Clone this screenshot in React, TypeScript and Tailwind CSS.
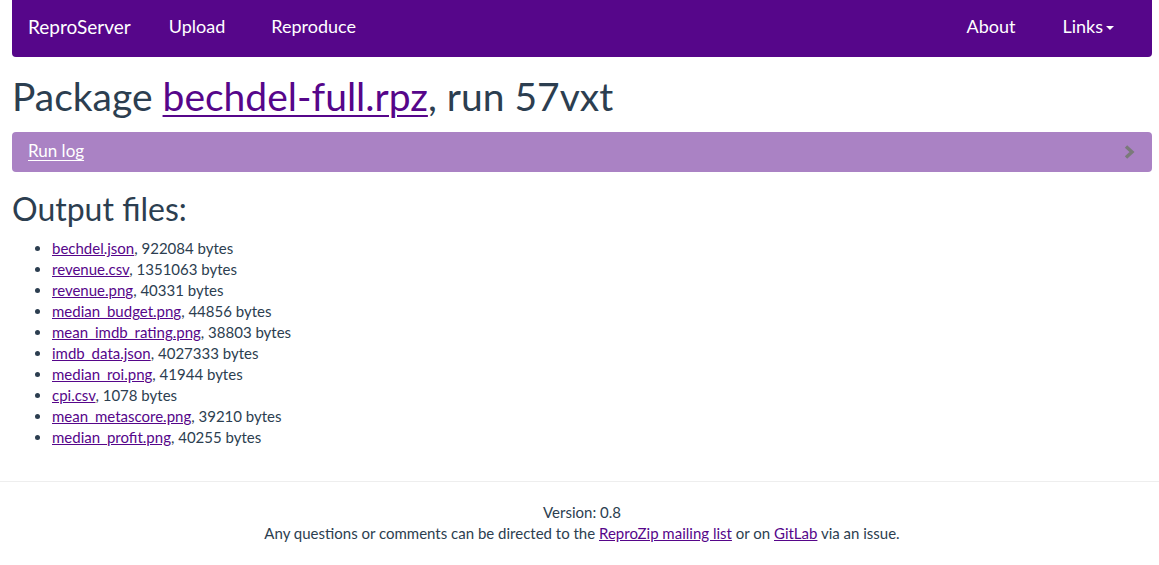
const files: [string, number][] = [
  ["bechdel.json", 922084],
  ["revenue.csv", 1351063],
  ["revenue.png", 40331],
  ["median_budget.png", 44856],
  ["mean_imdb_rating.png", 38803],
  ["imdb_data.json", 4027333],
  ["median_roi.png", 41944],
  ["cpi.csv", 1078],
  ["mean_metascore.png", 39210],
  ["median_profit.png", 40255],
];

function Navbar() {
  return (
    <nav className="ml-3 mr-[7px] h-[57px] bg-[#56068a] rounded-b-[4px] flex items-center text-white text-[18px] pb-[4px]">
      <a className="pl-4 text-[19px]">ReproServer</a>
      <a className="ml-[38px]">Upload</a>
      <a className="ml-[46px]">Reproduce</a>
      <div className="flex-1" />
      <a>About</a>
      <a className="ml-[47px] flex items-center">
        Links
        <span className="ml-[3px] mt-[2px] w-0 h-0 border-x-[4px] border-x-transparent border-t-[4px] border-t-white" />
      </a>
      <div className="w-[38px]" />
    </nav>
  );
}

export default function App() {
  return (
    <div
      className="min-h-screen bg-white text-[#2c3e50] text-[15px] leading-[21px]"
      style={{ fontFamily: "Lato, 'Noto Sans', sans-serif" }}
    >
      <Navbar />
      <div className="pl-3 pr-[7px]">
        <h1 className="mt-[18px] text-[39px] leading-[43px]">
          Package{" "}
          <a className="text-[#56068a] underline decoration-[2px] underline-offset-[4px]">
            bechdel-full.rpz
          </a>
          , run 57vxt
        </h1>
        <div className="mt-[14px] h-[40px] rounded-[4px] bg-[#aa82c4] flex items-center pl-4 pr-[17px] pb-[3px] text-[17px]">
          <a className="text-white underline underline-offset-[3px]">Run log</a>
          <div className="flex-1" />
          <svg width="11" height="14" viewBox="0 0 11 14" className="mt-[3px]">
            <path d="M2 1.5 L8 7 L2 12.5" fill="none" stroke="#7a7a7a" strokeWidth="3.4" />
          </svg>
        </div>
        <h2 className="mt-[19px] text-[32px] leading-[35px]">Output files:</h2>
        <ul className="mt-[12px] list-disc pl-[40px]">
          {files.map(([name, size]) => (
            <li key={name}>
              <a className="text-[#56068a] underline">{name}</a>, {size} bytes
            </li>
          ))}
        </ul>
      </div>
      <hr className="mt-[33px] border-t border-[#eeeeee]" />
      <footer className="mt-[20px] pl-3 pr-[7px] text-center">
        <div>Version: 0.8</div>
        <div>
          Any questions or comments can be directed to the{" "}
          <a className="text-[#56068a] underline">ReproZip mailing list</a> or on{" "}
          <a className="text-[#56068a] underline">GitLab</a> via an issue.
        </div>
      </footer>
    </div>
  );
}
